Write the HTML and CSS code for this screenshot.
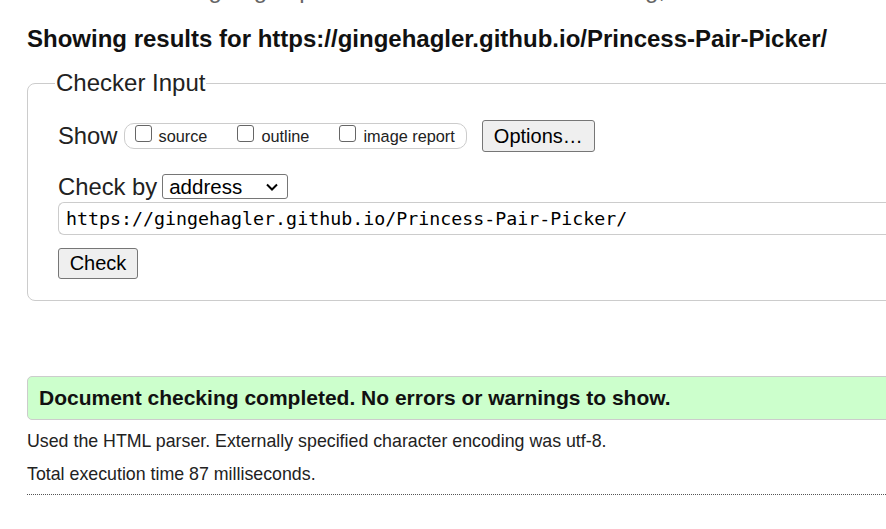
FILE: index.html
```html
<!DOCTYPE html>
<html lang="en">
<head>
<meta charset="utf-8">
<title>Nu Html Checker</title>
<link rel="stylesheet" href="styles.css">
</head>
<body>
<div class="page">
  <p class="intro">This tool is an ongoing experiment in better HTML checking, and its behavior remains subject to change</p>
  <h2 class="results-title">Showing results for https://gingehagler.github.io/Princess-Pair-Picker/</h2>
  <fieldset class="checker">
    <legend class="checker-legend">Checker Input</legend>
    <div class="row show-row">
      <span class="row-label">Show</span>
      <span class="options-group">
        <label class="opt"><span class="box"></span><span>source</span></label>
        <label class="opt"><span class="box"></span><span>outline</span></label>
        <label class="opt"><span class="box"></span><span>image report</span></label>
      </span>
      <span class="btn btn-options">Options…</span>
    </div>
    <div class="row checkby-row">
      <span class="row-label">Check by</span>
      <span class="select">address
        <svg class="chev" width="12" height="8" viewBox="0 0 12 8"><path d="M1 1.5 L6 6.5 L11 1.5" fill="none" stroke="#000" stroke-width="2"/></svg>
      </span>
    </div>
    <div class="url-input">https://gingehagler.github.io/Princess-Pair-Picker/</div>
    <span class="btn btn-check">Check</span>
  </fieldset>
  <div class="success">Document checking completed. No errors or warnings to show.</div>
  <p class="details">Used the HTML parser. Externally specified character encoding was utf-8.</p>
  <p class="details">Total execution time 87 milliseconds.</p>
  <hr class="rule">
</div>
</body>
</html>
```
FILE: styles.css
```css
html, body {
  margin: 0;
  padding: 0;
  background: #fff;
  overflow: hidden;
}
body {
  font-family: "Liberation Sans", Arial, sans-serif;
  color: #000;
}
.page {
  width: 1000px;
  padding-left: 27px;
  box-sizing: border-box;
}
.intro {
  margin: -24px 0 0 0;
  font-size: 24px;
  line-height: 27px;
  color: #666;
  white-space: nowrap;
}
.results-title {
  margin: 22px 0 0 0;
  font-size: 24px;
  line-height: 28px;
  font-weight: bold;
  color: #111;
}
.checker {
  margin: 17px 0 0 0;
  padding: 0 0 21px 30px;
  border: 1px solid #ccc;
  border-radius: 8px;
  min-width: 0;
}
.checker-legend {
  padding: 0 1px;
  margin-left: -3px;
  font-size: 24px;
  line-height: 26px;
  color: #222;
}
.row {
  display: flex;
  align-items: center;
}
.show-row {
  margin-top: 24px;
  height: 32px;
}
.row-label {
  font-size: 23.8px;
  color: #222;
  margin-right: 5px;
}
.options-group {
  display: flex;
  align-items: center;
  height: 26px;
  box-sizing: border-box;
  border: 1px solid #ccc;
  border-radius: 10px;
  padding: 0 11px 0 10px;
  margin-left: 1px;
}
.opt {
  display: flex;
  align-items: center;
  font-size: 16.3px;
  color: #222;
  margin-right: 30px;
}
.opt:last-child { margin-right: 0; }
.box {
  width: 17px;
  height: 17px;
  border: 1.5px solid #666;
  border-radius: 3px;
  box-sizing: border-box;
  margin-right: 7px;
  margin-top: -6px;
}
.btn {
  display: inline-flex;
  align-items: center;
  justify-content: center;
  background: #efefef;
  border: 1px solid #767676;
  border-radius: 3px;
  font-size: 20px;
  color: #000;
  box-sizing: border-box;
}
.btn-options {
  margin-left: 15px;
  width: 113px;
  height: 32px;
}
.checkby-row {
  margin-top: 22px;
  height: 25px;
}
.select {
  display: inline-flex;
  align-items: center;
  justify-content: space-between;
  width: 126px;
  height: 25px;
  box-sizing: border-box;
  border: 1px solid #767676;
  border-radius: 3px;
  padding: 0 9px 0 6px;
  font-size: 20.5px;
  margin-left: 0;
}
.url-input {
  margin-top: 3px;
  height: 33px;
  box-sizing: border-box;
  border: 1px solid #ccc;
  border-right: none;
  border-radius: 6px 0 0 6px;
  padding-left: 7px;
  font-family: "DejaVu Sans Mono", "Liberation Mono", monospace;
  font-size: 18.3px;
  line-height: 31px;
  color: #000;
  white-space: nowrap;
}
.btn-check {
  margin-top: 13px;
  width: 80px;
  height: 31px;
}
.success {
  margin-top: 75px;
  height: 44px;
  box-sizing: border-box;
  background: #ccffcc;
  border: 1px solid #ccc;
  border-radius: 5px;
  padding-left: 11px;
  font-size: 21px;
  font-weight: bold;
  line-height: 42px;
  color: #111;
}
.details {
  margin: 10px 0 0 0;
  font-size: 17.8px;
  line-height: 22px;
  color: #222;
}
.details + .details { margin-top: 11px; }
.rule {
  margin: 9px 0 0 0;
  border: none;
  border-top: 1px dotted #555;
}
```
